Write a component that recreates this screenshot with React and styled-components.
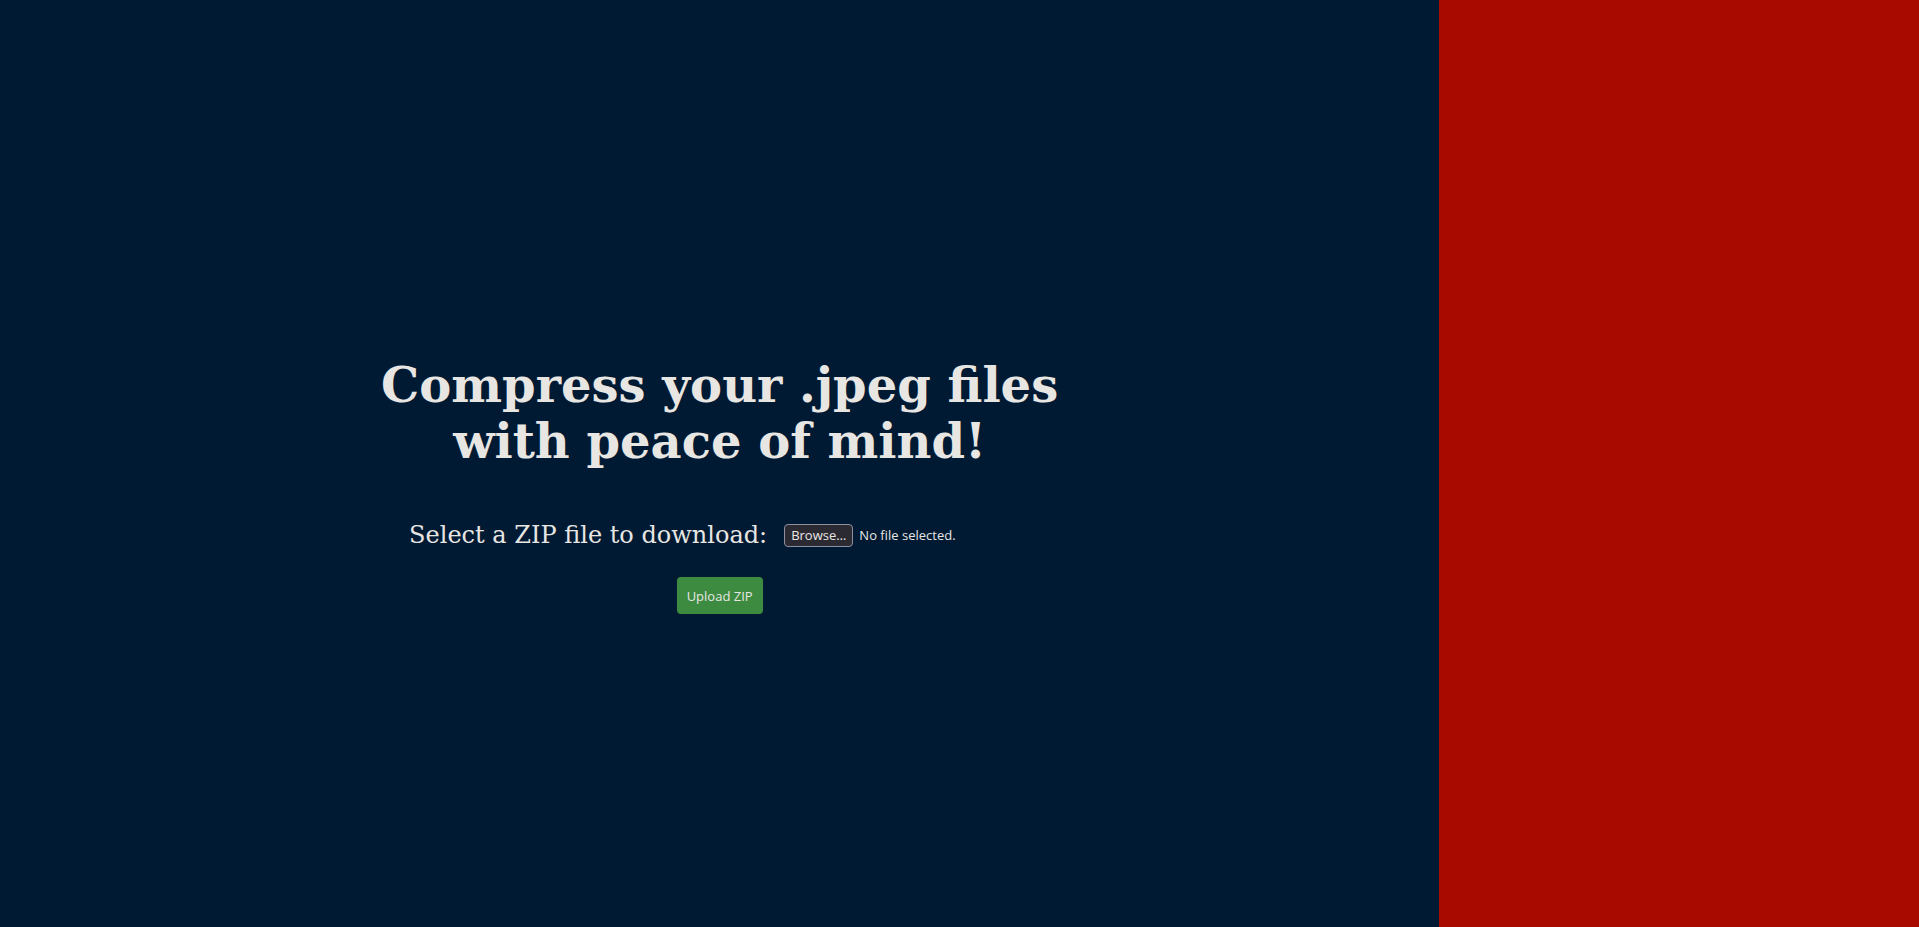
import React from "react";
import styled, { createGlobalStyle } from "styled-components";

const Global = createGlobalStyle`
  html, body { margin: 0; padding: 0; height: 100%; }
  body { background: #001a33; }
  #root { height: 100%; }
`;

const Page = styled.div`
  display: flex;
  height: 100vh;
  width: 100%;
`;

const Main = styled.main`
  flex: 0 0 75%;
  box-sizing: border-box;
  padding-top: 44px;
  background: #001a33;
  display: flex;
  flex-direction: column;
  align-items: center;
  justify-content: center;
  color: #e8e6e3;
`;

const Side = styled.aside`
  flex: 1;
  background: #a80a00;
`;

const Title = styled.h1`
  font-family: "DejaVu Serif", serif;
  font-weight: bold;
  font-size: 48px;
  line-height: normal;
  text-align: center;
  margin: 0 0 52px;
  color: #e8e6e3;
`;

const Form = styled.form`
  display: flex;
  flex-direction: column;
  align-items: center;
  gap: 28px;
`;

const Row = styled.div`
  display: flex;
  align-items: center;
  gap: 17px;
`;

const Label = styled.label`
  font-family: "DejaVu Serif", serif;
  font-size: 24px;
  color: #e8e6e3;
`;

const FileField = styled.div`
  display: flex;
  align-items: center;
  gap: 6px;
  width: 246px;
  font-family: "Open Sans", "Noto Sans", sans-serif;
  font-size: 13px;
  color: #e8e6e3;
`;

const BrowseButton = styled.span`
  display: inline-flex;
  align-items: center;
  height: 21px;
  padding: 0 6px;
  background: #2b2a33;
  border: 1px solid #8f8f9d;
  border-radius: 4px;
  font-size: 13px;
  color: #e8e6e3;
`;

const Submit = styled.button`
  font-family: "Open Sans", "Noto Sans", sans-serif;
  font-size: 13px;
  color: #e8e6e3;
  background: #3d8b40;
  border: none;
  border-radius: 4px;
  padding: 0 10px;
  height: 37px;
  cursor: pointer;
`;

export default function App() {
  return (
    <>
      <Global />
      <Page>
        <Main>
          <Title>
            Compress your .jpeg files
            <br />
            with peace of mind!
          </Title>
          <Form onSubmit={(e) => e.preventDefault()}>
            <Row>
              <Label htmlFor="zip">Select a ZIP file to download:</Label>
              <FileField>
                <BrowseButton>Browse…</BrowseButton>
                <span>No file selected.</span>
              </FileField>
            </Row>
            <Submit type="submit">Upload ZIP</Submit>
          </Form>
        </Main>
        <Side />
      </Page>
    </>
  );
}
